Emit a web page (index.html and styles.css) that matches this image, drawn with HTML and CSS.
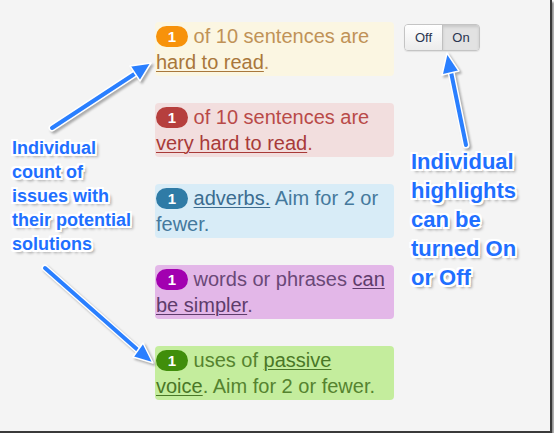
FILE: index.html
```html
<!DOCTYPE html>
<html lang="en">
<head>
<meta charset="utf-8">
<title>Highlights</title>
<link rel="stylesheet" href="styles.css">
</head>
<body>
<div class="frame">
  <div class="layout">
    <div class="cards">
      <div class="card card-hard"><span class="badge">1</span> of 10 sentences are <u>hard to read</u>.</div>
      <div class="card card-vhard"><span class="badge">1</span> of 10 sentences are <u>very hard to read</u>.</div>
      <div class="card card-adverb"><span class="badge">1</span> <u>adverbs.</u> Aim for 2 or fewer.</div>
      <div class="card card-simple"><span class="badge">1</span> words or phrases <u>can be simpler</u>.</div>
      <div class="card card-passive"><span class="badge">1</span> uses of <u>passive voice</u>. Aim for 2 or fewer.</div>
    </div>
    <div class="toggle">
      <button class="tg tg-off">Off</button>
      <button class="tg tg-on">On</button>
    </div>
  </div>

  <p class="note note-left">Individual count of issues with their potential solutions</p>
  <p class="note note-right">Individual highlights can be turned On or Off</p>

  <svg class="arrows" width="550" height="431" viewBox="0 0 550 431">
    <g class="arrow-outline">
      <line x1="52" y1="128" x2="136" y2="73"/>
      <line x1="45" y1="268" x2="139" y2="351"/>
      <line x1="466" y1="145" x2="451" y2="72"/>
    </g>
    <g class="arrow-line">
      <line x1="52" y1="128" x2="136" y2="73"/>
      <line x1="45" y1="268" x2="139" y2="351"/>
      <line x1="466" y1="145" x2="451" y2="72"/>
    </g>
    <g class="arrow-head">
      <polygon points="151,63 140,81 130,66"/>
      <polygon points="153,363 133,357 143,343"/>
      <polygon points="447,53 459,71 442,75"/>
    </g>
  </svg>
</div>
</body>
</html>
```

FILE: styles.css
```css
* { box-sizing: border-box; }

html, body {
  margin: 0;
  padding: 0;
  background: #ffffff;
}

.frame {
  position: relative;
  width: 552px;
  height: 433px;
  background: #f4f4f4;
  border-right: 2px solid #3a3a3a;
  border-bottom: 2px solid #3a3a3a;
  box-shadow: 2px 2px 2px rgba(0, 0, 0, 0.45);
  font-family: "Liberation Sans", Arial, sans-serif;
}

.layout {
  display: flex;
  align-items: flex-start;
  gap: 10px;
  padding: 22px 0 0 155px;
}

.cards {
  display: flex;
  flex-direction: column;
  gap: 27px;
  width: 239px;
}

.card {
  font-size: 20px;
  line-height: 26px;
  padding: 1px 7px 1px 1px;
  border-radius: 4px;
}

.card u {
  text-decoration-thickness: 1px;
  text-underline-offset: 2px;
}

.badge {
  display: inline-block;
  width: 32px;
  height: 21px;
  line-height: 21px;
  border-radius: 11px;
  text-align: center;
  color: #ffffff;
  font-size: 15px;
  font-weight: bold;
  vertical-align: 1px;
}

.card-hard { background: #fbf6e2; color: #c09257; }
.card-hard .badge { background: #f7920a; }
.card-hard u { color: #a9773b; }

.card-vhard { background: #f2dede; color: #b94a48; }
.card-vhard .badge { background: #b63f3d; }
.card-vhard u { color: #a83a38; }

.card-adverb { background: #d8ecf7; color: #45799d; }
.card-adverb .badge { background: #2f7ba6; }
.card-adverb u { color: #3b6c90; }

.card-simple { background: #e3b7e8; color: #6a4877; }
.card-simple .badge { background: #a200b0; }
.card-simple u { color: #5e3c6b; }

.card-passive { background: #c4ed9d; color: #55832f; }
.card-passive .badge { background: #408e0b; }
.card-passive u { color: #4a7727; }

.toggle {
  display: flex;
  margin-top: 2px;
  border: 1px solid #c4c4c4;
  border-radius: 4px;
  overflow: hidden;
  box-shadow: 0 1px 1px rgba(0, 0, 0, 0.08);
}

.tg {
  width: 37px;
  height: 25px;
  margin: 0;
  border: 0;
  padding: 0;
  font-family: "Liberation Sans", Arial, sans-serif;
  font-size: 13px;
  color: #2a3550;
}

.tg-off {
  background: linear-gradient(#ffffff, #ececec);
}

.tg-on {
  border-left: 1px solid #c0c0c0;
  background: #e2e2e2;
  box-shadow: inset 0 2px 3px rgba(0, 0, 0, 0.12);
}

.note {
  position: absolute;
  margin: 0;
  font-weight: bold;
  color: #1f6fff;
  text-shadow:
    2px 0 0 #fff, -2px 0 0 #fff, 0 2px 0 #fff, 0 -2px 0 #fff,
    1px 1px 0 #fff, -1px -1px 0 #fff, 1px -1px 0 #fff, -1px 1px 0 #fff,
    2px 2px 0 #fff, -2px 2px 0 #fff, 2px -2px 0 #fff, -2px -2px 0 #fff,
    3px 3px 3px rgba(0, 0, 0, 0.4);
}

.note-left {
  left: 12px;
  top: 136px;
  width: 125px;
  font-size: 18px;
  line-height: 24px;
}

.note-right {
  left: 411px;
  top: 147px;
  width: 122px;
  font-size: 22px;
  line-height: 29px;
}

.arrows {
  position: absolute;
  left: 0;
  top: 0;
  pointer-events: none;
  filter: drop-shadow(2px 2px 1px rgba(0, 0, 0, 0.3));
}

.arrow-outline line {
  stroke: #ffffff;
  stroke-width: 7;
  stroke-linecap: round;
}

.arrow-line line {
  stroke: #2a7fff;
  stroke-width: 4;
  stroke-linecap: round;
}

.arrow-head polygon {
  fill: #2a7fff;
  stroke: #ffffff;
  stroke-width: 1.5;
  stroke-linejoin: round;
}
```
